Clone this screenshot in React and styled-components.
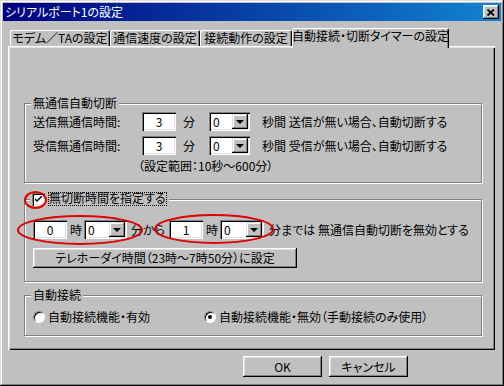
import React from "react";
import styled, { createGlobalStyle } from "styled-components";

const FONT = `"Noto Sans CJK JP", "Noto Sans", sans-serif`;

const Global = createGlobalStyle`
  html, body { margin: 0; padding: 0; background: #c0c0c0; }
  * { box-sizing: border-box; }
`;

const Window = styled.div`
  position: relative;
  width: 504px;
  height: 386px;
  padding: 3px;
  display: flex;
  flex-direction: column;
  background: #c0c0c0;
  color: #000;
  font-family: ${FONT};
  font-size: 12px;
  line-height: 14px;
  font-feature-settings: "palt";
  box-shadow: inset -1px -1px #000, inset 1px 1px #dfdfdf,
    inset -2px -2px #808080, inset 2px 2px #fff;
`;

const TitleBar = styled.div`
  height: 18px;
  display: flex;
  align-items: center;
  justify-content: space-between;
  padding: 0 2px;
  background: linear-gradient(90deg, #000080, #1084d0);
  color: #fff;
`;

const TitleText = styled.span`
  font-size: 12px;
  letter-spacing: 0;
`;

const CloseButton = styled.div`
  width: 16px;
  height: 14px;
  display: flex;
  align-items: center;
  justify-content: center;
  background: #c0c0c0;
  box-shadow: inset -1px -1px #000, inset 1px 1px #fff,
    inset -2px -2px #808080, inset 2px 2px #dfdfdf;
`;

const Body = styled.div`
  flex: 1;
  display: flex;
  flex-direction: column;
  padding: 7px 6px 0 5px;
`;

const TabRow = styled.div`
  height: 18px;
  display: flex;
  align-items: flex-end;
  padding-left: 2px;
`;

const Tab = styled.div`
  position: relative;
  width: ${(p) => p.$w}px;
  height: ${(p) => (p.$active ? 20 : 16)}px;
  margin-bottom: ${(p) => (p.$active ? -2 : 0)}px;
  z-index: ${(p) => (p.$active ? 2 : 1)};
  padding-bottom: ${(p) => (p.$active ? 4 : 0)}px;
  display: flex;
  align-items: center;
  justify-content: center;
  white-space: nowrap;
  background: #c0c0c0;
  border-radius: 2px 2px 0 0;
  box-shadow: inset 1px 1px #fff, inset -1px 0 #000, inset -2px 0 #808080;
`;

const Panel = styled.div`
  position: relative;
  height: 304px;
  padding: 50px 13px 0 16px;
  display: flex;
  flex-direction: column;
  box-shadow: inset 1px 1px #fff, inset 2px 2px #dfdfdf,
    inset -1px -1px #000, inset -2px -2px #808080;
`;

const Group = styled.fieldset`
  margin: ${(p) => p.$mt || 0}px 0 0 0;
  padding: ${(p) => p.$pt}px 8px ${(p) => p.$pb}px 8px;
  min-width: 0;
  border: 1px solid #808080;
  box-shadow: inset 1px 1px #fff, 1px 1px #fff;
`;

const Legend = styled.legend`
  padding: 0 2px;
  margin-left: ${(p) => p.$ml || -2}px;
  line-height: 14px;
  height: 14px;
  display: flex;
  align-items: center;
  background: #c0c0c0;
`;

const Row = styled.div`
  height: 19px;
  display: flex;
  align-items: center;
  white-space: nowrap;
  margin-top: ${(p) => p.$mt || 0}px;
`;

const Label = styled.span`
  width: ${(p) => (p.$w ? `${p.$w}px` : "auto")};
  margin-left: ${(p) => p.$ml || 0}px;
  margin-right: ${(p) => p.$mr || 0}px;
  flex-shrink: 0;
`;

const TextBox = styled.div`
  width: ${(p) => p.$w}px;
  height: 19px;
  flex-shrink: 0;
  margin-left: ${(p) => p.$ml || 0}px;
  background: #fff;
  text-align: center;
  line-height: 19px;
  box-shadow: inset 1px 1px #808080, inset 2px 2px #000,
    inset -1px -1px #fff, inset -2px -2px #dfdfdf;
`;

const Combo = styled.div`
  width: ${(p) => p.$w}px;
  height: 19px;
  flex-shrink: 0;
  margin-left: ${(p) => p.$ml || 0}px;
  padding: 2px;
  display: flex;
  align-items: center;
  background: #fff;
  box-shadow: inset 1px 1px #808080, inset 2px 2px #000,
    inset -1px -1px #fff, inset -2px -2px #dfdfdf;
`;

const ComboText = styled.span`
  flex: 1;
  padding-left: 2px;
`;

const DropButton = styled.div`
  width: 16px;
  height: 15px;
  display: flex;
  align-items: center;
  justify-content: center;
  background: #c0c0c0;
  box-shadow: inset -1px -1px #000, inset 1px 1px #dfdfdf,
    inset -2px -2px #808080, inset 2px 2px #fff;
  &::after {
    content: "";
    width: 0;
    height: 0;
    margin-top: 1px;
    border-left: 4px solid transparent;
    border-right: 4px solid transparent;
    border-top: 4px solid #000;
  }
`;

const RangeNote = styled.div`
  margin-top: 4px;
  padding-left: 105px;
  line-height: 14px;
  height: 14px;
`;

const PushButton = styled.div`
  width: ${(p) => p.$w}px;
  height: ${(p) => p.$h || 21}px;
  margin-top: ${(p) => p.$mt || 0}px;
  display: flex;
  align-items: center;
  justify-content: center;
  background: #c0c0c0;
  white-space: nowrap;
  box-shadow: inset -1px -1px #000, inset 1px 1px #fff,
    inset -2px -2px #808080, inset 2px 2px #dfdfdf;
`;

const CheckBox = styled.div`
  width: 13px;
  height: 13px;
  background: #fff;
  display: flex;
  align-items: center;
  justify-content: center;
  box-shadow: inset 1px 1px #808080, inset 2px 2px #000,
    inset -1px -1px #fff, inset -2px -2px #dfdfdf;
`;

const FocusLabel = styled.span`
  margin-left: 3px;
  padding: 0 1px;
  height: 14px;
  line-height: 12px;
  outline: 1px dotted #000;
  outline-offset: -1px;
`;

const RadioRow = styled.div`
  height: 14px;
  display: flex;
  align-items: center;
  white-space: nowrap;
`;

const RadioItem = styled.div`
  width: ${(p) => (p.$w ? `${p.$w}px` : "auto")};
  display: flex;
  align-items: center;
  gap: 3px;
  flex-shrink: 0;
`;

const Radio = styled.div`
  width: 12px;
  height: 12px;
  border-radius: 50%;
  background: #fff;
  display: flex;
  align-items: center;
  justify-content: center;
  border: 1px solid;
  border-color: #808080 #fff #fff #808080;
  box-shadow: inset 1px 1px #000;
  &::after {
    content: "";
    width: 4px;
    height: 4px;
    border-radius: 50%;
    background: ${(p) => (p.$on ? "#000" : "transparent")};
  }
`;

const Footer = styled.div`
  margin-top: 6px;
  display: flex;
  justify-content: flex-end;
  gap: 7px;
  padding-right: 87px;
`;

const Overlay = styled.svg`
  position: absolute;
  left: 0;
  top: 0;
  pointer-events: none;
`;

export default function App() {
  return (
    <>
      <Global />
      <Window>
        <TitleBar>
          <TitleText>シリアルポート1の設定</TitleText>
          <CloseButton>
            <svg width="8" height="7" viewBox="0 0 8 7">
              <path d="M0.5 0.5 L7 6.5 M7 0.5 L0.5 6.5" stroke="#000" strokeWidth="1.8" />
            </svg>
          </CloseButton>
        </TitleBar>
        <Body>
          <TabRow>
            <Tab $w={100}>モデム／TAの設定</Tab>
            <Tab $w={90}>通信速度の設定</Tab>
            <Tab $w={92}>接続動作の設定</Tab>
            <Tab $w={157} $active>自動接続・切断タイマーの設定</Tab>
          </TabRow>
          <Panel>
            <Group $pt={2} $pb={9}>
              <Legend>無通信自動切断</Legend>
              <Row>
                <Label $w={109}>送信無通信時間:</Label>
                <TextBox $w={34}>3</TextBox>
                <Label $ml={7} $mr={14}>分</Label>
                <Combo $w={41}>
                  <ComboText>0</ComboText>
                  <DropButton />
                </Combo>
                <Label $ml={12}>秒間 送信が無い場合、自動切断する</Label>
              </Row>
              <Row $mt={5}>
                <Label $w={109}>受信無通信時間:</Label>
                <TextBox $w={34}>3</TextBox>
                <Label $ml={7} $mr={14}>分</Label>
                <Combo $w={41}>
                  <ComboText>0</ComboText>
                  <DropButton />
                </Combo>
                <Label $ml={12}>秒間 受信が無い場合、自動切断する</Label>
              </Row>
              <RangeNote>（設定範囲：10秒～600分）</RangeNote>
            </Group>

            <Group $mt={9} $pt={14} $pb={13}>
              <Legend $ml={-3}>
                <CheckBox>
                  <svg width="7" height="7" viewBox="0 0 7 7">
                    <path d="M0 2 L0 4 L2 6 L7 1 L7 -1 L2 4 Z" fill="#000" />
                  </svg>
                </CheckBox>
                <FocusLabel>無切断時間を指定する</FocusLabel>
              </Legend>
              <Row>
                <TextBox $w={34}>0</TextBox>
                <Label $ml={3}>時</Label>
                <Combo $w={43} $ml={2}>
                  <ComboText>0</ComboText>
                  <DropButton />
                </Combo>
                <Label $ml={4}>分から</Label>
                <TextBox $w={34} $ml={4}>1</TextBox>
                <Label $ml={3}>時</Label>
                <Combo $w={44} $ml={2}>
                  <ComboText>0</ComboText>
                  <DropButton />
                </Combo>
                <Label $ml={5}>分までは 無通信自動切断を無効とする</Label>
              </Row>
              <PushButton $w={264} $h={20} $mt={9}>
                テレホーダイ時間（23時～7時50分）に設定
              </PushButton>
            </Group>

            <Group $mt={6} $pt={8} $pb={11}>
              <Legend>自動接続</Legend>
              <RadioRow>
                <RadioItem $w={171}>
                  <Radio />
                  <span>自動接続機能・有効</span>
                </RadioItem>
                <RadioItem>
                  <Radio $on />
                  <span>自動接続機能・無効（手動接続のみ使用）</span>
                </RadioItem>
              </RadioRow>
            </Group>
          </Panel>
          <Footer>
            <PushButton $w={79}>OK</PushButton>
            <PushButton $w={79}>キャンセル</PushButton>
          </Footer>
        </Body>
        <Overlay width="504" height="386" viewBox="0 0 504 386">
          <g fill="none" stroke="#e00000" strokeWidth="2">
            <ellipse cx="35.5" cy="200" rx="10.5" ry="8" />
            <ellipse cx="80" cy="230" rx="62" ry="14" />
            <ellipse cx="214" cy="229" rx="59" ry="14" />
          </g>
        </Overlay>
      </Window>
    </>
  );
}
